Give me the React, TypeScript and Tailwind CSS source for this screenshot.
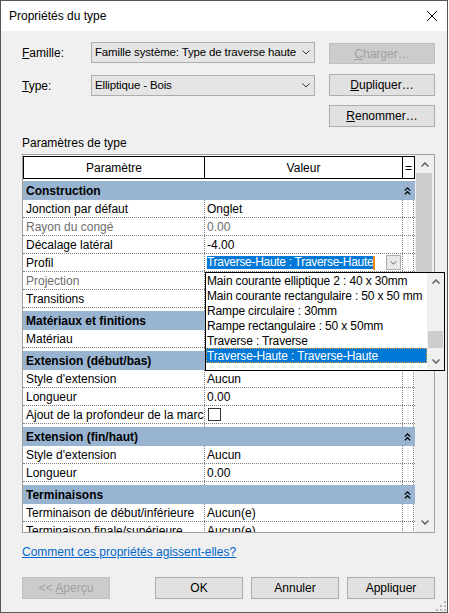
import React from 'react';

// Revit "Propriétés du type" dialog, with the Profil dropdown open

const font = { fontFamily: '"Liberation Sans", Arial, sans-serif' };

function ChevronDown({ color = '#404040', w = 8, h = 5, sw = 1 }: { color?: string; w?: number; h?: number; sw?: number }) {
  return (
    <svg width={w} height={h} viewBox="0 0 8 5" className="block">
      <path d="M0.5 0.5 L4 4 L7.5 0.5" fill="none" stroke={color} strokeWidth={sw} />
    </svg>
  );
}

function ChevronUp({ color = '#606060', sw = 1.5 }: { color?: string; sw?: number }) {
  return (
    <svg width={8} height={5} viewBox="0 0 8 5" className="block">
      <path d="M0.5 4.5 L4 1 L7.5 4.5" fill="none" stroke={color} strokeWidth={sw} />
    </svg>
  );
}

function DoubleUp() {
  return (
    <svg width={7} height={8} viewBox="0 0 7 8" className="block">
      <path d="M0.8 3.6 L3.5 0.9 L6.2 3.6" fill="none" stroke="#000" strokeWidth={1.3} />
      <path d="M0.8 7.4 L3.5 4.7 L6.2 7.4" fill="none" stroke="#000" strokeWidth={1.3} />
    </svg>
  );
}

function Combo({ text }: { text: string }) {
  return (
    <div className="w-[224px] shrink-0 h-[21px] bg-[#e5e5e5] border border-[#adadad] flex items-center pl-[3px] pr-[4px]">
      <span className="flex-1 whitespace-nowrap overflow-hidden text-[11.5px] tracking-[-0.15px]">{text}</span>
      <ChevronDown color="#333" />
    </div>
  );
}

function Btn({ children, disabled, w = 'w-[106px]', h = 'h-[22px]', extra = '' }: { children: React.ReactNode; disabled?: boolean; w?: string; h?: string; extra?: string }) {
  return (
    <div
      className={`${w} ${h} ${extra} shrink-0 border flex items-center justify-center ${
        disabled ? 'bg-[#cccccc] border-[#bfbfbf] text-[#a0a0a0]' : 'bg-[#e1e1e1] border-[#adadad] text-black'
      }`}
    >
      {children}
    </div>
  );
}

function Cells({ label, value, muted, h = 'h-[18px]', last }: { label?: React.ReactNode; value?: React.ReactNode; muted?: boolean; h?: string; last?: boolean }) {
  const dot = 'border-dotted border-[#7d7d7d]';
  return (
    <div className={`flex shrink-0 ${h} bg-white ${last ? '' : `border-b ${dot}`} ${muted ? 'text-[#6d6d6d]' : 'text-black'}`}>
      <div className={`w-[182px] shrink-0 border-r ${dot} pl-[3px] flex items-center overflow-hidden whitespace-nowrap`}>{label}</div>
      <div className={`w-[198px] shrink-0 border-r ${dot} pl-[2px] flex items-center overflow-hidden whitespace-nowrap`}>{value}</div>
      <div className={`w-[11px] shrink-0 border-r ${dot}`} />
    </div>
  );
}

function Group({ title }: { title: string }) {
  return (
    <div className="h-[19px] shrink-0 bg-[#99b4d1] flex items-center font-bold text-black">
      <span className="flex-1 pl-[3px] whitespace-nowrap">{title}</span>
      <div className="w-[12px] pl-[1px]">
        <DoubleUp />
      </div>
    </div>
  );
}

const listItems = [
  'Main courante elliptique 2 : 40 x 30mm',
  'Main courante rectangulaire : 50 x 50 mm',
  'Rampe circulaire : 30mm',
  'Rampe rectangulaire : 50 x 50mm',
  'Traverse : Traverse',
  'Traverse-Haute : Traverse-Haute',
];

export default function App() {
  return (
    <div className="w-[449px] h-[613px] bg-white" style={font}>
      <div className="relative w-[448px] h-[613px] border border-[#555555] bg-[#f0f0f0] flex flex-col text-[12px] text-black">
        {/* title bar */}
        <div className="h-[30px] shrink-0 bg-white flex items-center pl-[8px] pr-[10px]">
          <span className="flex-1">Propriétés du type</span>
          <svg width={10} height={10} viewBox="0 0 10 10" className="block">
            <path d="M0 0 L10 10 M10 0 L0 10" stroke="#000" strokeWidth={1} />
          </svg>
        </div>

        <div className="flex flex-col pl-[21px] pr-[12px]">
          {/* Famille */}
          <div className="mt-[11px] h-[22px] flex items-start">
            <div className="w-[69px] shrink-0 h-[21px] flex items-center">
              <span>
                <span className="underline">F</span>amille:
              </span>
            </div>
            <Combo text="Famille système: Type de traverse haute" />
            <Btn disabled h="h-[21px]" extra="ml-[14px] mt-[1px]">
              <span>
                <span className="underline">C</span>harger…
              </span>
            </Btn>
          </div>

          {/* Type */}
          <div className="mt-[10px] h-[22px] flex items-start">
            <div className="w-[69px] shrink-0 h-[21px] mt-[1px] flex items-center">
              <span>
                <span className="underline">T</span>ype:
              </span>
            </div>
            <div className="mt-[1px]">
              <Combo text="Elliptique - Bois" />
            </div>
            <Btn extra="ml-[14px]">
              <span>
                <span className="underline">D</span>upliquer…
              </span>
            </Btn>
          </div>

          <div className="mt-[9px] flex justify-end">
            <Btn>
              <span>
                <span className="underline">R</span>enommer…
              </span>
            </Btn>
          </div>

          <div className="mt-[9px] leading-[14px]">Paramètres de type</div>

          {/* property grid */}
          <div className="mt-[4px] h-[379px] border border-[#a0a0a0] flex">
            <div className="w-[392px] shrink-0 bg-white overflow-hidden flex flex-col">
              <div className="h-[1px] shrink-0" />
              <div className="h-[23px] shrink-0 flex border-y border-black">
                <div className="w-[182px] border-x border-black flex items-center justify-center">Paramètre</div>
                <div className="w-[198px] border-r border-black flex items-center justify-center">Valeur</div>
                <div className="w-[12px] border-r border-black flex items-center justify-center">=</div>
              </div>
              <div className="h-[2px] shrink-0" />

              <Group title="Construction" />
              <Cells label="Jonction par défaut" value="Onglet" />
              <Cells label="Rayon du congé" value="0.00" muted />
              <Cells label="Décalage latéral" value="-4.00" />
              <Cells
                label="Profil"
                value={
                  <div className="flex items-center w-full pr-[1px]">
                    <span className="bg-[#0078d7] text-white leading-[13px] whitespace-nowrap tracking-[-0.3px]">
                      Traverse-Haute : Traverse-Haute
                    </span>
                    <span className="w-[2px] h-[14px] bg-[#f08a1c]" />
                    <span className="flex-1" />
                    <div className="w-[15px] h-[15px] border border-[#adadad] bg-[#e8e8e8] flex items-center justify-center">
                      <ChevronDown color="#404040" w={7} h={4} />
                    </div>
                  </div>
                }
              />
              <Cells label="Projection" muted />
              <Cells label="Transitions" />
              <Cells h="h-[3px]" last />

              <Group title="Matériaux et finitions" />
              <Cells label="Matériau" />
              <Cells h="h-[3px]" last />

              <Group title="Extension (début/bas)" />
              <Cells label="Style d'extension" value="Aucun" />
              <Cells label="Longueur" value="0.00" />
              <Cells
                label="Ajout de la profondeur de la marche"
                value={<div className="w-[13px] h-[13px] border border-[#333333] bg-white ml-[1px]" />}
              />
              <Cells h="h-[3px]" last />

              <Group title="Extension (fin/haut)" />
              <Cells label="Style d'extension" value="Aucun" />
              <Cells label="Longueur" value="0.00" />
              <Cells h="h-[3px]" last />

              <Group title="Terminaisons" />
              <Cells label="Terminaison de début/inférieure" value="Aucun(e)" />
              <Cells label="Terminaison finale/supérieure" value="Aucun(e)" />
            </div>

            {/* grid scrollbar */}
            <div className="w-[19px] shrink-0 bg-[#f0f0f0] flex flex-col">
              <div className="h-[18px] flex items-center justify-center">
                <ChevronUp />
              </div>
              <div className="ml-[1px] w-[16px] h-[170px] bg-[#cdcdcd]" />
              <div className="flex-1" />
              <div className="h-[18px] mb-[1px] flex items-center justify-center">
                <ChevronDown color="#606060" sw={1.5} />
              </div>
            </div>
          </div>

          <div className="mt-[12px] leading-[14px]">
            <span className="text-[#0066cc] underline">Comment ces propriétés agissent-elles?</span>
          </div>

          <div className="mt-[18px] flex">
            <Btn disabled w="w-[88px]">
              <span>
                &lt;&lt; <span className="underline">A</span>perçu
              </span>
            </Btn>
            <div className="ml-auto flex gap-[8px]">
              <Btn w="w-[88px]">OK</Btn>
              <Btn w="w-[88px]">Annuler</Btn>
              <Btn w="w-[88px]">Appliquer</Btn>
            </div>
          </div>
        </div>

        {/* open Profil list */}
        <div className="absolute left-[204px] top-[271px] w-[240px] h-[99px] border border-black bg-white flex tracking-[-0.15px]">
          <div className="w-[221px] flex flex-col">
            {listItems.map((item, i) =>
              i === listItems.length - 1 ? (
                <div
                  key={item}
                  className="h-[15px] bg-[#0078d7] text-white border border-dotted border-[#f0a040] flex items-center whitespace-nowrap"
                >
                  {item}
                </div>
              ) : (
                <div key={item} className="h-[15px] pl-[1px] flex items-center whitespace-nowrap">
                  {item}
                </div>
              )
            )}
          </div>
          <div className="w-[17px] bg-[#f0f0f0] flex flex-col">
            <div className="h-[17px] flex items-center justify-center">
              <ChevronUp />
            </div>
            <div className="flex-1" />
            <div className="ml-[1px] w-[15px] h-[17px] bg-[#cdcdcd]" />
            <div className="h-[5px]" />
            <div className="h-[17px] flex items-center justify-center">
              <ChevronDown color="#606060" sw={1.5} />
            </div>
          </div>
        </div>

        {/* resize grip */}
        <svg width={10} height={10} viewBox="0 0 10 10" className="absolute right-[1px] bottom-[1px]">
          <rect x={8} y={0} width={2} height={2} fill="#b8b8b8" />
          <rect x={4} y={4} width={2} height={2} fill="#b8b8b8" />
          <rect x={8} y={4} width={2} height={2} fill="#b8b8b8" />
          <rect x={0} y={8} width={2} height={2} fill="#b8b8b8" />
          <rect x={4} y={8} width={2} height={2} fill="#b8b8b8" />
          <rect x={8} y={8} width={2} height={2} fill="#b8b8b8" />
        </svg>
      </div>
    </div>
  );
}
